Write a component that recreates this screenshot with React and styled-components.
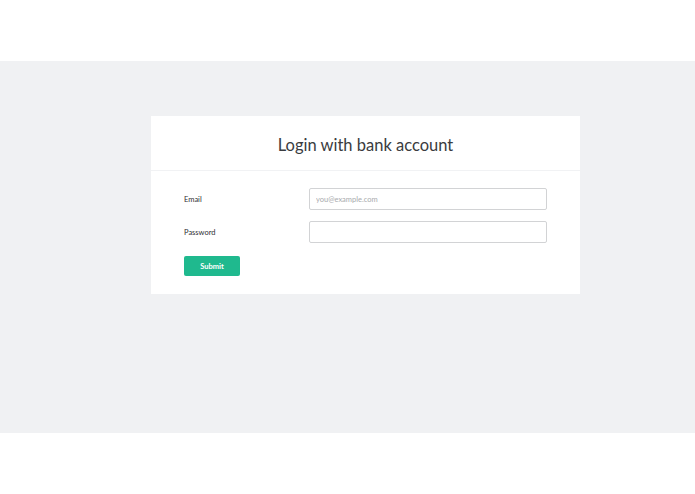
import styled, { createGlobalStyle } from 'styled-components';

const GlobalStyle = createGlobalStyle`
  html, body {
    margin: 0;
    padding: 0;
    background: #ffffff;
    font-family: Lato, "Open Sans", sans-serif;
  }
`;

const Page = styled.div`
  display: flex;
  flex-direction: column;
  height: 494px;
`;

const Band = styled.main`
  margin-top: 61px;
  height: 372px;
  background: #f0f1f3;
  padding-top: 55px;
  box-sizing: border-box;
`;

const Card = styled.section`
  width: 429px;
  margin: 0 auto 0 151px;
  background: #ffffff;
`;

const CardHeader = styled.header`
  height: 55px;
  display: flex;
  align-items: center;
  justify-content: center;
  border-bottom: 1px solid #f1f2f4;
  box-sizing: border-box;
`;

const Title = styled.h1`
  margin: 0;
  font-size: 16.5px;
  font-weight: 400;
  color: #3a3c40;
  padding-top: 4px;
`;

const Form = styled.form`
  display: flex;
  flex-direction: column;
  gap: 11px;
  padding: 17px 33px 18px 33px;
`;

const Row = styled.label`
  display: flex;
  align-items: center;
`;

const Label = styled.span`
  width: 125px;
  font-size: 7.5px;
  color: #2f3033;
`;

const Input = styled.input`
  width: 238px;
  height: 22px;
  box-sizing: border-box;
  border: 1px solid #d2d3d5;
  border-radius: 2px;
  padding: 0 6px;
  font-family: inherit;
  font-size: 7.5px;
  outline: none;

  &::placeholder {
    color: #a8aaad;
  }
`;

const Button = styled.button`
  align-self: flex-start;
  width: 56px;
  height: 20px;
  margin-top: 2px;
  border: none;
  border-radius: 2px;
  background: #1fb98e;
  color: #ffffff;
  font-family: inherit;
  font-size: 7.5px;
  font-weight: 700;
  cursor: pointer;
`;

export default function App() {
  return (
    <>
      <GlobalStyle />
      <Page>
        <Band>
          <Card>
            <CardHeader>
              <Title>Login with bank account</Title>
            </CardHeader>
            <Form onSubmit={(e) => e.preventDefault()}>
              <Row>
                <Label>Email</Label>
                <Input type="email" placeholder="you@example.com" />
              </Row>
              <Row>
                <Label>Password</Label>
                <Input type="password" />
              </Row>
              <Button type="submit">Submit</Button>
            </Form>
          </Card>
        </Band>
      </Page>
    </>
  );
}
